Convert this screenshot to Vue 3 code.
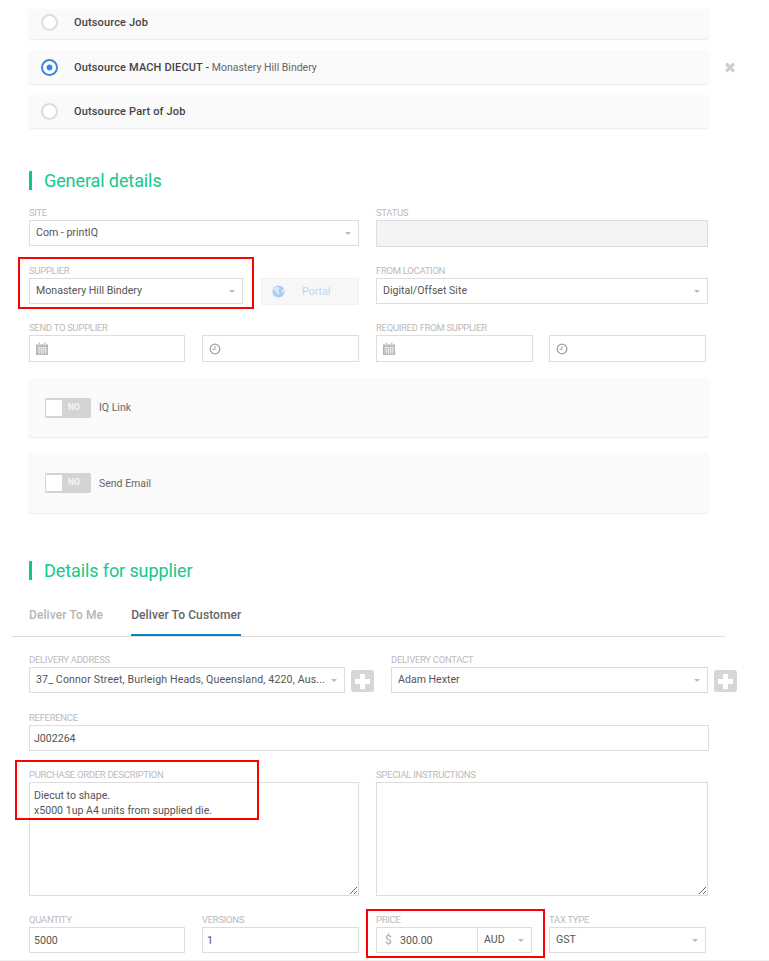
<template>
  <div class="page">
    <section class="options">
      <div v-for="option in options" :key="option.label" class="option-row">
        <div class="card option-card">
          <span class="radio" :class="{ checked: option.checked }"></span>
          <span class="option-label">{{ option.label }}</span>
          <span v-if="option.supplier" class="option-supplier">&nbsp;- <em>{{ option.supplier }}</em></span>
        </div>
        <svg v-if="option.checked" class="remove" viewBox="0 0 12 12">
          <path d="M1 3.2 3.2 1 6 3.8 8.8 1 11 3.2 8.2 6 11 8.8 8.8 11 6 8.2 3.2 11 1 8.8 3.8 6Z" />
        </svg>
      </div>
    </section>

    <h2 class="heading general">General details</h2>

    <div class="row row-site">
      <div class="field w330">
        <label>Site</label>
        <div class="select">Com - printIQ<i class="caret"></i></div>
      </div>
      <div class="field w332">
        <label>Status</label>
        <div class="status-box"></div>
      </div>
    </div>

    <div class="row row-supplier">
      <div class="field w214">
        <label>Supplier</label>
        <div class="select">Monastery Hill Bindery<i class="caret"></i></div>
      </div>
      <button class="portal">
        <svg viewBox="0 0 14 14" class="globe">
          <circle cx="7" cy="7" r="6.5" fill="#a9cdf2" />
          <path d="M3 2.5 7 2 8.5 4 6.5 6 8 8 7 11 5 9 3.5 6.5 1.5 6ZM10 5l2.5-.5.8 3-2 1.5Z" fill="#dbe9f8" />
        </svg>
        <span>Portal</span>
      </button>
      <div class="field w332">
        <label>From location</label>
        <div class="select">Digital/Offset Site<i class="caret"></i></div>
      </div>
    </div>

    <div class="row row-dates">
      <div v-for="group in dateGroups" :key="group.label" class="date-group" :class="group.cls">
        <label>{{ group.label }}</label>
        <div class="date-pair">
          <div class="input-box">
            <svg viewBox="0 0 12 13" class="cal">
              <path d="M0 2.5h12V13H0Z" fill="#b4b4b4" />
              <path d="M2.5 .5h1.5v3.4H2.5ZM8 .5h1.5v3.4H8Z" fill="#b4b4b4" stroke="#fff" stroke-width=".4" />
              <path d="M1 5.5h10M1 7.7h10M1 9.9h10M3.2 5v7.5M5.4 5v7.5M7.6 5v7.5M9.8 5v7.5" stroke="#fff" stroke-width=".6" />
            </svg>
          </div>
          <div class="input-box">
            <svg viewBox="0 0 12 12" class="clock">
              <circle cx="6" cy="6" r="4.8" fill="none" stroke="#a0a0a0" stroke-width="1.3" />
              <path d="M6 3.2V6.4H3.6" fill="none" stroke="#a0a0a0" stroke-width="1" />
            </svg>
          </div>
        </div>
      </div>
    </div>

    <div v-for="toggle in toggles" :key="toggle" class="card toggle-card">
      <span class="switch"><i class="knob"></i><b>NO</b></span>
      <span class="toggle-label">{{ toggle }}</span>
    </div>

    <h2 class="heading supplier">Details for supplier</h2>

    <nav class="tabs">
      <a class="tab">Deliver To Me</a>
      <a class="tab active">Deliver To Customer</a>
    </nav>

    <div class="row row-delivery">
      <div class="field w316">
        <label>Delivery address</label>
        <div class="select address">
          <span>37_ Connor Street, Burleigh Heads, Queensland, 4220, Aus...</span><i class="caret"></i>
        </div>
      </div>
      <button class="add"><i></i></button>
      <div class="field w317 contact">
        <label>Delivery contact</label>
        <div class="select">Adam Hexter<i class="caret"></i></div>
      </div>
      <button class="add"><i></i></button>
    </div>

    <div class="field reference">
      <label>Reference</label>
      <input class="input" value="J002264" />
    </div>

    <div class="row row-text">
      <div class="field w330">
        <label>Purchase order description</label>
        <textarea class="area" :value="description"></textarea>
      </div>
      <div class="field w332">
        <label>Special instructions</label>
        <textarea class="area"></textarea>
      </div>
    </div>

    <div class="row row-bottom">
      <div class="field w156">
        <label>Quantity</label>
        <input class="input" value="5000" />
      </div>
      <div class="field w157">
        <label>Versions</label>
        <input class="input" value="1" />
      </div>
      <div class="field w156">
        <label>Price</label>
        <div class="price">
          <span class="dollar">$</span>
          <span class="amount">300.00</span>
          <span class="currency">AUD<i class="caret"></i></span>
        </div>
      </div>
      <div class="field w157">
        <label>Tax type</label>
        <div class="select">GST<i class="caret"></i></div>
      </div>
    </div>

    <div class="foot-line"></div>

    <!-- annotation boxes drawn over the screenshot -->
    <div class="mark mark-supplier"></div>
    <div class="mark mark-description"></div>
    <div class="mark mark-price"></div>
  </div>
</template>

<script setup>
const options = [
  { label: 'Outsource Job' },
  { label: 'Outsource MACH DIECUT', supplier: 'Monastery Hill Bindery', checked: true },
  { label: 'Outsource Part of Job' }
]

const dateGroups = [
  { label: 'Send to supplier', cls: 'left' },
  { label: 'Required from supplier', cls: 'right' }
]

const toggles = ['IQ Link', 'Send Email']

const description = 'Diecut to shape.\nx5000 1up A4 units from supplied die.'
</script>

<style>
body {
  margin: 0;
  background: #fff;
}
</style>

<style scoped>
.page {
  position: relative;
  width: 769px;
  height: 961px;
  overflow: hidden;
  box-sizing: border-box;
  padding: 9px 0 0 29px;
  font-family: Roboto, "Liberation Sans", sans-serif;
  font-size: 10.6px;
  color: #555;
}

.card {
  background: #fafafa;
  border-radius: 4px;
  box-shadow: 0 1px 1px rgba(0, 0, 0, 0.08);
  box-sizing: border-box;
}

.options {
  display: flex;
  flex-direction: column;
  gap: 11px;
  margin-left: -1px;
}

.option-row {
  display: flex;
  align-items: center;
}

.option-card {
  width: 681px;
  height: 33px;
  display: flex;
  align-items: center;
  padding-left: 13px;
  flex: none;
}

.option-row:first-child .option-card {
  height: 30px;
  padding-bottom: 4px;
  border-radius: 0 0 4px 4px;
}

.option-row:nth-child(2) .option-card {
  height: 34px;
}

.radio {
  width: 17px;
  height: 17px;
  box-sizing: border-box;
  border: 2px solid #ddd;
  border-radius: 50%;
  background: #fff;
  margin-right: 16px;
  flex: none;
}

.radio.checked {
  border-color: #3d85de;
  background: radial-gradient(circle, #3d85de 0 2.6px, #fff 3.4px);
}

.option-label {
  font-weight: 500;
  font-size: 11px;
  letter-spacing: 0.15px;
  color: #444;
}

.option-supplier {
  font-weight: 500;
  font-size: 10.5px;
  color: #444;
}

.option-supplier em {
  font-style: normal;
  font-weight: 400;
  color: #666;
}

.remove {
  width: 12px;
  height: 13px;
  margin-left: 15px;
  fill: #ccc;
}

.heading {
  margin: 0;
  height: 19px;
  border-left: 3px solid #0fc78a;
  padding-left: 12px;
  font-size: 18px;
  font-weight: 400;
  letter-spacing: -0.1px;
  line-height: 19px;
  color: #14c98b;
}

.heading.general {
  margin-top: 43px;
}

.heading.supplier {
  margin-top: 48px;
}

.row {
  display: flex;
}

.field label,
.date-group label {
  display: block;
  height: 11px;
  margin-bottom: 2px;
  font-size: 9.5px;
  line-height: 11px;
  letter-spacing: -0.3px;
  text-transform: uppercase;
  color: #bbb;
}

.row-site {
  margin-top: 17px;
  gap: 17px;
}

.row-supplier {
  margin-top: 18px;
}

.row-dates {
  margin-top: 17px;
  gap: 17px;
}

.w330 { width: 330px; }
.w332 { width: 332px; }
.w214 { width: 214px; }
.w316 { width: 316px; }
.w317 { width: 317px; }
.w156 { width: 156px; }
.w157 { width: 157px; }

.select,
.input,
.input-box,
.status-box,
.price {
  box-sizing: border-box;
  border: 1px solid #ddd;
  background: #fff;
}

.select {
  position: relative;
  height: 26px;
  line-height: 24px;
  padding-left: 6px;
  color: #555;
}

.select.address {
  white-space: nowrap;
  letter-spacing: 0.14px;
}

.caret {
  position: absolute;
  right: 7px;
  top: 11px;
  width: 0;
  height: 0;
  border-left: 3.5px solid transparent;
  border-right: 3.5px solid transparent;
  border-top: 3.5px solid #bbb;
}

.status-box {
  height: 27px;
  background: #f4f4f4;
}

.portal {
  width: 98px;
  height: 27px;
  margin: 13px 17px 0 18px;
  padding: 0 0 0 10px;
  box-sizing: border-box;
  border: 1px solid #f0f0f0;
  border-radius: 2px;
  background: #f7f7f7;
  display: flex;
  align-items: center;
  font-family: inherit;
  font-size: 10.6px;
  color: #bcd6f3;
}

.globe {
  width: 13px;
  height: 13px;
  margin-right: 17px;
}

.date-group {
  width: 330px;
}

.date-pair {
  display: flex;
  justify-content: space-between;
}

.input-box {
  width: 157px;
  height: 27px;
  display: flex;
  align-items: center;
  padding-left: 6px;
}

.date-group.left .input-box:first-child {
  width: 156px;
}

.cal {
  width: 12px;
  height: 13px;
}

.clock {
  width: 12px;
  height: 12px;
}

.toggle-card {
  width: 681px;
  margin-left: -1px;
  display: flex;
  align-items: center;
  padding-left: 17px;
  height: 59px;
  margin-top: 16px;
}

.toggle-card + .toggle-card {
  height: 60px;
}

.switch {
  position: relative;
  width: 46px;
  height: 20px;
  border-radius: 2px;
  background: #d4d4d4;
  margin-right: 8px;
  display: block;
  flex: none;
}

.knob {
  position: absolute;
  left: 1px;
  top: 2px;
  width: 16px;
  height: 16px;
  background: #fff;
}

.switch b {
  position: absolute;
  left: 23px;
  top: 0;
  font-size: 8.5px;
  line-height: 19px;
  color: #f4f4f4;
}

.toggle-label {
  font-size: 10.5px;
  color: #666;
}

.tabs {
  display: flex;
  gap: 28px;
  margin: 24px 0 0 -17px;
  padding-left: 17px;
  width: 696px;
  height: 32px;
  border-bottom: 1px solid #ddd;
}

.tab {
  font-size: 12px;
  font-weight: 500;
  letter-spacing: 0.1px;
  line-height: 22px;
  color: #b5b5b5;
  height: 32px;
  box-sizing: border-box;
}

.tab.active {
  color: #666;
  border-bottom: 2px solid #0a84c9;
}

.row-delivery {
  margin-top: 17px;
  align-items: flex-start;
}

.add {
  width: 23px;
  height: 22px;
  margin: 16px 0 0 6px;
  padding: 0;
  border: none;
  border-radius: 3px;
  background: #d6d6d6;
  position: relative;
  flex: none;
}

.add i {
  position: absolute;
  left: 4px;
  top: 9px;
  width: 15px;
  height: 5px;
  background: #fff;
}

.add i::after {
  content: "";
  position: absolute;
  left: 5px;
  top: -5px;
  width: 5px;
  height: 15px;
  background: #fff;
}

.contact {
  margin-left: 17px;
}

.reference {
  width: 680px;
  margin-top: 19px;
}

.input {
  display: block;
  width: 100%;
  height: 26px;
  padding: 0 4px;
  font-family: inherit;
  font-size: 10.6px;
  color: #555;
  outline: none;
}

.row-text {
  margin-top: 18px;
  gap: 17px;
}

.area {
  display: block;
  box-sizing: border-box;
  width: 100%;
  height: 114px;
  border: 1px solid #ddd;
  padding: 5px 4px;
  font-family: inherit;
  font-size: 10.6px;
  line-height: 15px;
  color: #555;
  outline: none;
  resize: both;
}

.row-bottom {
  margin-top: 18px;
  gap: 17px;
}

.price {
  display: flex;
  align-items: center;
  height: 26px;
}

.dollar {
  width: 23px;
  padding-left: 8px;
  box-sizing: border-box;
  font-size: 12px;
  color: #aaa;
}

.amount {
  width: 77px;
}

.currency {
  position: relative;
  flex: 1;
  height: 100%;
  line-height: 24px;
  padding-left: 6px;
  border-left: 1px solid #ddd;
}

.foot-line {
  position: absolute;
  left: 0;
  right: 0;
  top: 960px;
  height: 1px;
  background: #f0f0f0;
}

.mark {
  position: absolute;
  box-sizing: border-box;
  border: 2px solid #f00;
  pointer-events: none;
}

.mark-supplier {
  left: 18px;
  top: 257px;
  width: 236px;
  height: 52px;
}

.mark-description {
  left: 15px;
  top: 760px;
  width: 244px;
  height: 60px;
}

.mark-price {
  left: 366px;
  top: 909px;
  width: 179px;
  height: 49px;
}
</style>
